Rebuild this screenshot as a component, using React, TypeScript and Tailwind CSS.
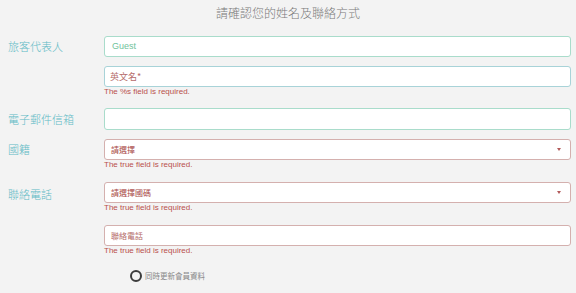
const cjk = { fontFamily: '"Noto Sans CJK TC", "Noto Sans", sans-serif' };
const latin = { fontFamily: '"Liberation Sans", "Noto Sans CJK TC", sans-serif' };

const Label = ({ children }: { children: React.ReactNode }) => (
  <div className="flex h-[21px] items-center pl-2 text-[11px] font-light text-[#5fbac5]" style={cjk}>
    {children}
  </div>
);

const ErrorText = ({ children }: { children: React.ReactNode }) => (
  <div className="h-[10px] text-[8px] leading-[10px] text-[#b9504c]" style={latin}>
    {children}
  </div>
);

const Caret = () => (
  <span className="mr-[3px] inline-block h-0 w-0 border-x-[2px] border-t-[3px] border-x-transparent border-t-[#b25a5a]" />
);

export default function App() {
  return (
    <div className="h-[293px] w-[576px] overflow-hidden bg-[#f3f3f3]">
      <div className="flex h-[26px] items-center justify-center text-[12px] font-light text-[#7a7a7a]" style={cjk}>
        請確認您的姓名及聯絡方式
      </div>

      <div className="mt-[10px] grid grid-cols-[104px_467px]">
        <Label>旅客代表人</Label>
        <div className="flex h-[21px] items-center rounded-[3px] border border-[#a9dccb] bg-white px-[7px] text-[9px] text-[#71c39c]" style={latin}>
          Guest
        </div>
      </div>

      <div className="mt-[9px] grid grid-cols-[104px_467px]">
        <div />
        <div>
          <div className="flex h-[21px] items-center rounded-[3px] border border-[#a8d3d8] bg-white px-[5px] text-[9px] text-[#b56c6a]" style={cjk}>
            英文名*
          </div>
          <ErrorText>The %s field is required.</ErrorText>
        </div>
      </div>

      <div className="mt-[11px] grid grid-cols-[104px_467px]">
        <div className="flex h-[22px] items-center pl-2 text-[11px] font-light text-[#5fbac5]" style={cjk}>
          電子郵件信箱
        </div>
        <div className="h-[22px] rounded-[3px] border border-[#a9dccb] bg-white" />
      </div>

      <div className="mt-[9px] grid grid-cols-[104px_467px]">
        <Label>國籍</Label>
        <div>
          <div className="flex h-[21px] items-center justify-between rounded-[3px] border border-[#d4b0ae] bg-white px-[6px] text-[8px] text-[#a94a47]" style={cjk}>
            <span>請選擇</span>
            <Caret />
          </div>
          <ErrorText>The true field is required.</ErrorText>
        </div>
      </div>

      <div className="mt-[12px] grid grid-cols-[104px_467px]">
        <div className="flex h-[25px] items-center pl-2 text-[11px] font-light text-[#5fbac5]" style={cjk}>
          聯絡電話
        </div>
        <div>
          <div className="flex h-[21px] items-center justify-between rounded-[3px] border border-[#d4b0ae] bg-white px-[6px] text-[8px] text-[#a94a47]" style={cjk}>
            <span>請選擇國碼</span>
            <Caret />
          </div>
          <ErrorText>The true field is required.</ErrorText>
        </div>
      </div>

      <div className="mt-[12px] grid grid-cols-[104px_467px]">
        <div />
        <div>
          <div className="flex h-[21px] items-center rounded-[3px] border border-[#d4b0ae] bg-white px-[6px] text-[8px] text-[#b56c6a]" style={cjk}>
            聯絡電話
          </div>
          <ErrorText>The true field is required.</ErrorText>
        </div>
      </div>

      <div className="mt-[14px] flex items-center pl-[130px]">
        <span className="h-[12px] w-[12px] rounded-full border-[2px] border-[#3c3c3c]" />
        <span className="ml-[3px] text-[7.5px] text-[#888]" style={cjk}>
          同時更新會員資料
        </span>
      </div>
    </div>
  );
}
